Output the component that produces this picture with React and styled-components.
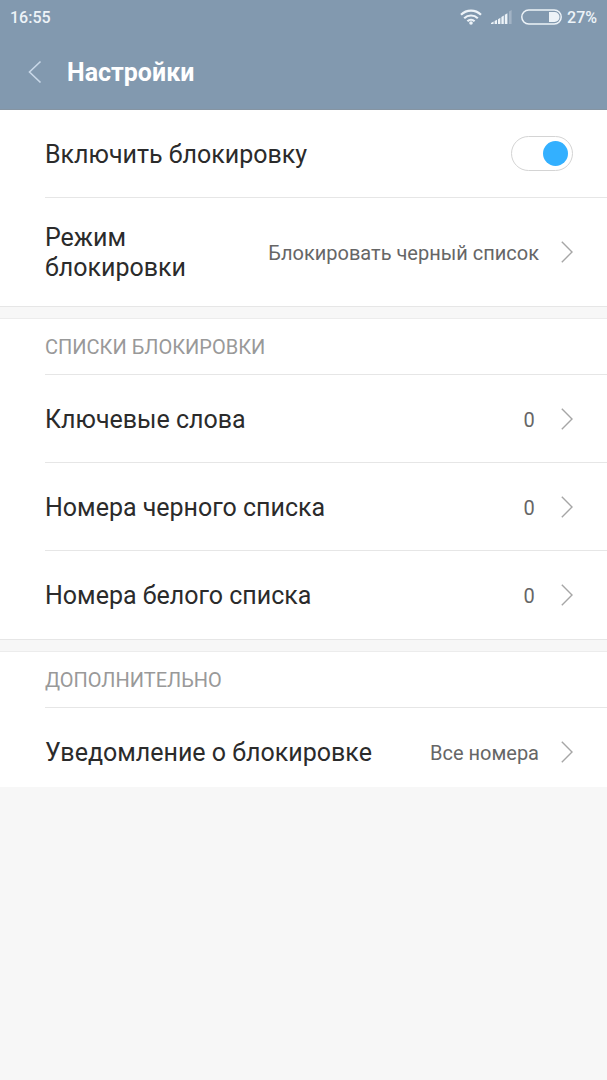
import React, { useState } from "react";
import styled, { createGlobalStyle } from "styled-components";

const lists = [
  { id: "keywords", title: "Ключевые слова", count: 0 },
  { id: "blacklist", title: "Номера черного списка", count: 0 },
  { id: "whitelist", title: "Номера белого списка", count: 0 },
];

const WifiIcon = () => (
  <svg width="22" height="16" viewBox="0 0 22 16" fill="none" aria-hidden="true">
    <g stroke="#edf3f8" strokeWidth="2.2">
      <path d="M1 5.8C6.6 0.3 15.4 0.3 21 5.8" />
      <path d="M4.2 9.2C8 5.6 14 5.6 17.8 9.2" />
      <path d="M7.4 12.3C9.4 10.4 12.6 10.4 14.6 12.3" />
    </g>
    <circle cx="11" cy="14" r="1.8" fill="#edf3f8" />
  </svg>
);

const SignalIcon = () => (
  <svg width="21" height="14" viewBox="0 0 21 14" fill="#edf3f8" aria-hidden="true">
    <path d="M0 14V13L2.6 11.6V14z" />
    <path d="M3.6 14V11L6 9.8V14z" />
    <path d="M7 14V9.2L9.4 7.8V14z" />
    <path d="M10.4 14V7L12.8 5.6V14z" />
    <path d="M13.8 14V4.8L16.4 3.2V14z" />
    <path d="M18 14V1.6L20.6 0V14z" opacity="0.3" />
  </svg>
);

const BatteryIcon = () => (
  <svg width="41" height="16" viewBox="0 0 41 16" fill="none" aria-hidden="true">
    <rect x="0.8" y="1" width="39.4" height="14" rx="7" stroke="#edf3f8" strokeWidth="1.5" />
    <path d="M28 3H33.5A5 5 0 0 1 33.5 13H28z" fill="#edf3f8" />
  </svg>
);

const BackIcon = () => (
  <svg width="14" height="24" viewBox="0 0 14 24" fill="none" aria-hidden="true">
    <path d="M12.5 1.5L1.5 12L12.5 22.5" stroke="#c9d8e8" strokeWidth="1.6" />
  </svg>
);

const Chevron = () => (
  <ChevronSvg width="12" height="22" viewBox="0 0 12 22" fill="none" aria-hidden="true">
    <path d="M0.8 0.8L11 11L0.8 21.2" stroke="#a6a6a6" strokeWidth="1.4" />
  </ChevronSvg>
);

const LinkRow = ({ title, value, last }) => (
  <Row as="button" type="button" $last={last}>
    <Title>{title}</Title>
    <Value>{value}</Value>
    <Chevron />
  </Row>
);

export default function App() {
  const [enabled, setEnabled] = useState(true);

  return (
    <>
      <GlobalStyle />
      <Header>
        <StatusBar>
          <span>16:55</span>
          <StatusIcons>
            <WifiIcon />
            <SignalIcon />
            <BatteryIcon />
            <span>27%</span>
          </StatusIcons>
        </StatusBar>
        <TitleBar>
          <BackButton type="button" aria-label="Назад">
            <BackIcon />
          </BackButton>
          <h1>Настройки</h1>
        </TitleBar>
      </Header>
      <main>
        <Section>
          <Row as="label" htmlFor="enabled">
            <Title>Включить блокировку</Title>
            <Switch
              id="enabled"
              type="checkbox"
              role="switch"
              checked={enabled}
              onChange={(e) => setEnabled(e.target.checked)}
            />
          </Row>
          <LinkRow title="Режим блокировки" value="Блокировать черный список" last />
        </Section>
        <Section>
          <SectionTitle>СПИСКИ БЛОКИРОВКИ</SectionTitle>
          {lists.map((item, index) => (
            <LinkRow
              key={item.id}
              title={item.title}
              value={item.count}
              last={index === lists.length - 1}
            />
          ))}
        </Section>
        <Section>
          <SectionTitle>ДОПОЛНИТЕЛЬНО</SectionTitle>
          <LinkRow title="Уведомление о блокировке" value="Все номера" last />
        </Section>
      </main>
    </>
  );
}

const GlobalStyle = createGlobalStyle`
  * {
    box-sizing: border-box;
  }
  body {
    margin: 0;
    background-color: #f7f7f7;
    color: #2b2b2b;
    font-family: Roboto, "Noto Sans", sans-serif;
  }
`;

const Header = styled.header`
  background-color: #8299af;
  color: #ffffff;
  border-bottom: 1px solid #8594a2;
`;

const StatusBar = styled.div`
  display: flex;
  justify-content: space-between;
  align-items: center;
  height: 34px;
  padding: 0 10px;
  color: #edf3f8;
  font-size: 16px;
  font-weight: 500;
`;

const StatusIcons = styled.div`
  display: flex;
  align-items: center;
  gap: 9px;
  svg + span {
    margin-left: -4px;
  }
`;

const TitleBar = styled.div`
  display: flex;
  align-items: center;
  height: 75px;
  padding: 0 16px;
  h1 {
    margin: 0;
    padding-top: 2px;
    font-size: 25px;
    font-weight: 700;
    line-height: 30px;
  }
`;

const BackButton = styled.button`
  display: flex;
  align-items: center;
  width: 51px;
  height: 48px;
  padding: 0 12px;
  border: none;
  background: none;
  cursor: pointer;
`;

const Section = styled.section`
  background-color: #ffffff;
  & + & {
    margin-top: 11px;
    border-top: 1px solid #ececec;
  }
  &:not(:last-child) {
    border-bottom: 1px solid #e6e6e6;
  }
  &:last-child > :last-child {
    min-height: 0;
    padding: 28px 34px 19px 0;
  }
`;

const SectionTitle = styled.h2`
  margin: 0 0 0 45px;
  padding: 2px 34px 0 0;
  border-bottom: 1px solid #e6e6e6;
  color: #999999;
  font-size: 20px;
  font-weight: 400;
  line-height: 53px;
`;

const Row = styled.div`
  display: flex;
  align-items: center;
  width: calc(100% - 45px);
  min-height: 88px;
  margin: 0 0 0 45px;
  padding: 23px 34px 23px 0;
  border: none;
  border-bottom: ${({ $last }) => ($last ? "none" : "1px solid #e6e6e6")};
  background: none;
  color: inherit;
  font-family: inherit;
  text-align: left;
  cursor: pointer;
`;

const Title = styled.span`
  flex: 1;
  padding-top: 2px;
  font-size: 25px;
  line-height: 30px;
`;

const Value = styled.span`
  min-width: 20px;
  margin-left: 16px;
  padding-top: 2px;
  color: #666666;
  font-size: 20px;
  line-height: 30px;
  text-align: center;
  white-space: nowrap;
`;

const ChevronSvg = styled.svg`
  flex-shrink: 0;
  margin-left: 22px;
`;

const Switch = styled.input`
  appearance: none;
  display: flex;
  align-items: center;
  flex-shrink: 0;
  width: 62px;
  height: 35px;
  margin: 0;
  padding: 0 4px;
  border: 1px solid #d4d4d4;
  border-radius: 18px;
  background-color: #ffffff;
  cursor: pointer;
  &::before {
    content: "";
    width: 25px;
    height: 25px;
    border-radius: 50%;
    background-color: #c4c4c4;
  }
  &:checked::before {
    margin-left: auto;
    background-color: #33b0ff;
  }
`;
